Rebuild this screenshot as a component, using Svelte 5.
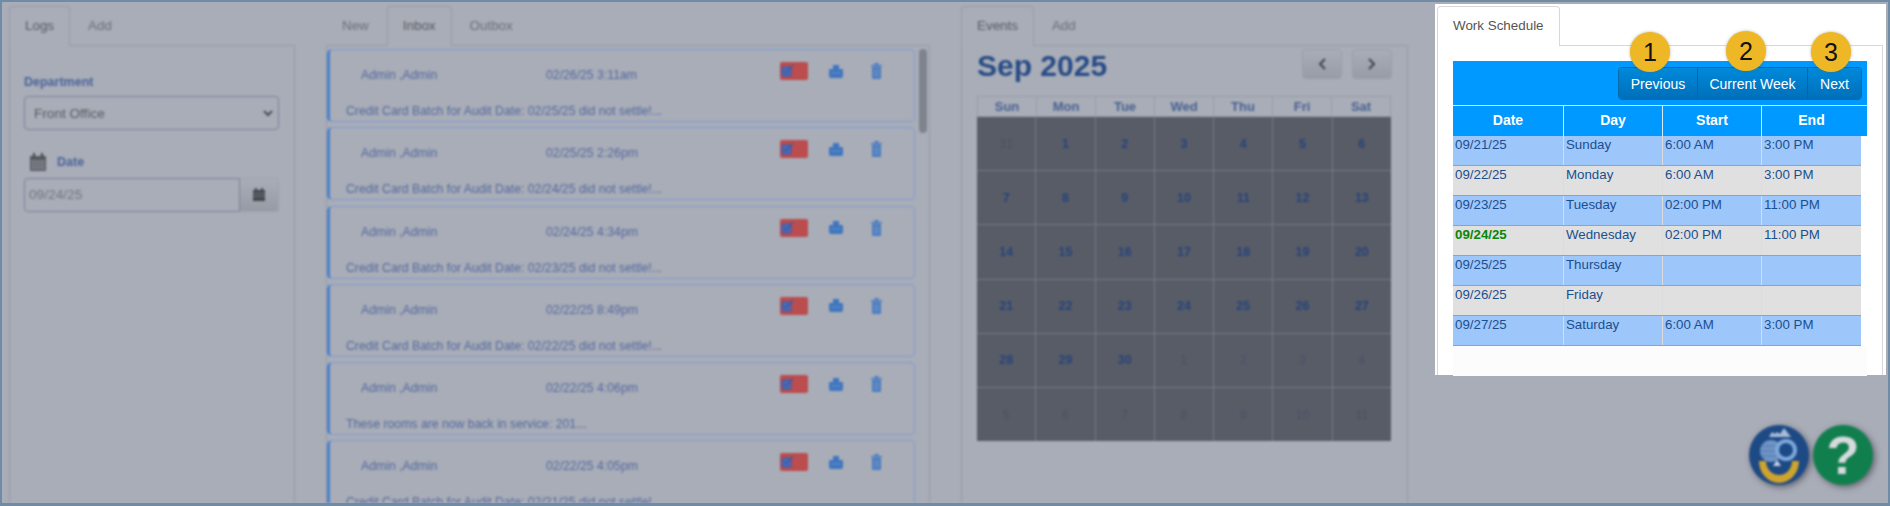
<script>
  const messages = [
    { date: '02/26/25 3:11am', text: 'Credit Card Batch for Audit Date: 02/25/25 did not settle!...' },
    { date: '02/25/25 2:26pm', text: 'Credit Card Batch for Audit Date: 02/24/25 did not settle!...' },
    { date: '02/24/25 4:34pm', text: 'Credit Card Batch for Audit Date: 02/23/25 did not settle!...' },
    { date: '02/22/25 8:49pm', text: 'Credit Card Batch for Audit Date: 02/22/25 did not settle!...' },
    { date: '02/22/25 4:06pm', text: 'These rooms are now back in service: 201...' },
    { date: '02/22/25 4:05pm', text: 'Credit Card Batch for Audit Date: 02/21/25 did not settle!...' }
  ];

  const weekdays = ['Sun', 'Mon', 'Tue', 'Wed', 'Thu', 'Fri', 'Sat'];

  // 31 from august, then september, then the start of october
  const days = [{ n: 31, off: true }];
  for (let i = 1; i <= 30; i++) days.push({ n: i, off: false });
  for (let i = 1; i <= 11; i++) days.push({ n: i, off: true });

  const schedule = [
    { date: '09/21/25', day: 'Sunday', start: '6:00 AM', end: '3:00 PM' },
    { date: '09/22/25', day: 'Monday', start: '6:00 AM', end: '3:00 PM' },
    { date: '09/23/25', day: 'Tuesday', start: '02:00 PM', end: '11:00 PM' },
    { date: '09/24/25', day: 'Wednesday', start: '02:00 PM', end: '11:00 PM', today: true },
    { date: '09/25/25', day: 'Thursday', start: '', end: '' },
    { date: '09/26/25', day: 'Friday', start: '', end: '' },
    { date: '09/27/25', day: 'Saturday', start: '6:00 AM', end: '3:00 PM' }
  ];
</script>

<div class="page">
  <div class="dim">
    <section class="col logs">
      <nav class="tabs">
        <span class="tab active">Logs</span>
        <span class="tab">Add</span>
      </nav>
      <div class="panel form">
        <span class="field-label">Department</span>
        <div class="select">
          <span>Front Office</span>
          <svg width="10" height="7" viewBox="0 0 10 7"><path d="M1 1l4 4 4-4" fill="none" stroke="#4a4d55" stroke-width="2"/></svg>
        </div>
        <div class="date-label">
          <svg width="18" height="18" viewBox="0 0 18 18">
            <path d="M1 3h16v14a1 1 0 0 1-1 1H2a1 1 0 0 1-1-1z" fill="#55585f"/>
            <path d="M4 0h2v4H4zM12 0h2v4h-2z" fill="#44474e"/>
            <path d="M2.5 7h13v9.500h-13z" fill="#82858d"/>
            <path d="M2.500 10h13M2.500 13h13M6 7v10M9 7v10M12 7v10" stroke="#5e6168" stroke-width=".8"/>
          </svg>
          <span class="field-label">Date</span>
        </div>
        <div class="date-input">
          <span class="date-value">09/24/25</span>
          <span class="date-btn">
            <svg width="14" height="14" viewBox="0 0 14 14">
              <path d="M1 2h12v11H1z" fill="#44474e"/>
              <path d="M3 0h2v3H3zM9 0h2v3H9z" fill="#44474e"/>
              <path d="M1 5.500h12M1 8.500h12" stroke="#82858d" stroke-width=".8"/>
            </svg>
          </span>
        </div>
      </div>
    </section>

    <section class="col inbox">
      <nav class="tabs">
        <span class="tab">New</span>
        <span class="tab active">Inbox</span>
        <span class="tab">Outbox</span>
      </nav>
      <div class="panel list">
        <div class="cards">
          {#each messages as msg}
            <article class="card">
              <div class="card-top">
                <span class="sender">Admin ,Admin</span>
                <span class="sent">{msg.date}</span>
                <span class="badge">
                  <svg width="14" height="14" viewBox="0 0 14 14">
                    <path d="M1 3h9v9H1z" fill="#4a6bb5" stroke="#3d5ba8"/>
                    <path d="M3 7l2 2 7-8" fill="none" stroke="#3d5ba8" stroke-width="1.500"/>
                  </svg>
                </span>
                <svg class="printer" width="14" height="13" viewBox="0 0 14 13">
                  <path d="M4 0h6v5H4z" fill="#3f76bf"/>
                  <path d="M0 5a1 1 0 0 1 1-1h12a1 1 0 0 1 1 1v6a2 2 0 0 1-2 2H2a2 2 0 0 1-2-2z" fill="#3f76bf"/>
                  <path d="M2 8h10" stroke="#7d9cc6" stroke-width=".7"/>
                </svg>
                <svg class="trash" width="11" height="16" viewBox="0 0 11 16">
                  <path d="M0 2h11v1.500H0zM3.500 0h4v2h-4z" fill="#4a7cc0"/>
                  <path d="M1 4h9v11a1 1 0 0 1-1 1H2a1 1 0 0 1-1-1z" fill="#4a7cc0"/>
                  <path d="M3.500 6v8M5.500 6v8M7.500 6v8" stroke="#7d9cc6" stroke-width=".7"/>
                </svg>
              </div>
              <p class="msg">{msg.text}</p>
            </article>
          {/each}
        </div>
        <div class="scroll"><div class="thumb"></div></div>
      </div>
    </section>

    <section class="col events">
      <nav class="tabs">
        <span class="tab active">Events</span>
        <span class="tab">Add</span>
      </nav>
      <div class="panel cal">
        <div class="cal-head">
          <h2>Sep 2025</h2>
          <div class="cal-nav">
            <button aria-label="Previous month">
              <svg width="10" height="12" viewBox="0 0 10 12"><path d="M8 1L3 6l5 5" fill="none" stroke="#3f424a" stroke-width="2"/></svg>
            </button>
            <button aria-label="Next month">
              <svg width="10" height="12" viewBox="0 0 10 12"><path d="M2 1l5 5-5 5" fill="none" stroke="#3f424a" stroke-width="2"/></svg>
            </button>
          </div>
        </div>
        <div class="cal-weekdays">
          {#each weekdays as d}
            <div class="wd">{d}</div>
          {/each}
        </div>
        <div class="cal-days">
          {#each days as d}
            <div class="day" class:off={d.off}>{d.n}</div>
          {/each}
        </div>
      </div>
    </section>

    <div class="helpers">
      <svg class="logo" width="60" height="60" viewBox="0 0 60 60">
        <circle cx="30" cy="30" r="30" fill="#1d4a85"/>
        <path d="M20 12l3-5 3 2 2-2 3 2 4-6 7 9z" fill="#a8bcd8"/>
        <circle cx="22" cy="26" r="11" fill="#6f93c4"/>
        <path d="M12 21h20M11 26h22M12 31h20" stroke="#527ab0" stroke-width="1"/>
        <circle cx="37" cy="25" r="9" fill="#1d4a85" stroke="#7fa8dc" stroke-width="4"/>
        <path d="M28 35l4 6h-8z" fill="#c6d2e2"/>
        <path d="M10 36h7a13 14 0 0 0 26 0h7a20 22 0 0 1-40 0z" fill="#cfa42e"/>
      </svg>
      <div class="help">?</div>
    </div>
  </div>

  <section class="spot">
    <nav class="tabs">
      <span class="tab active bright">Work Schedule</span>
    </nav>
    <div class="panel sched">
      <div class="sched-wrap">
        <div class="toolbar">
          <div class="btn-group">
            <button class="prev">Previous</button>
            <button class="cur">Current Week</button>
            <button class="nxt">Next</button>
          </div>
        </div>
        <div class="row head">
          <div>Date</div>
          <div>Day</div>
          <div>Start</div>
          <div>End</div>
        </div>
        {#each schedule as r, i}
          <div class="row body" class:alt={i % 2 === 1}>
            <div class:today={r.today}>{r.date}</div>
            <div>{r.day}</div>
            <div>{r.start}</div>
            <div>{r.end}</div>
          </div>
        {/each}
        <div class="sched-foot"></div>
      </div>
    </div>
    <span class="step one">1</span>
    <span class="step two">2</span>
    <span class="step three">3</span>
  </section>
</div>

<style>
  :global(body) {
    margin: 0;
    background: #a9adb8;
  }
  .page {
    position: relative;
    box-sizing: border-box;
    width: 1890px;
    height: 506px;
    overflow: hidden;
    display: flex;
    background: #a9adb8;
    border: 2px solid #6f8ba5;
    border-bottom-width: 3px;
    font-family: "Liberation Sans", Arial, sans-serif;
  }
  .dim {
    position: relative;
    flex: none;
    width: 1431px;
    height: 501px;
    display: flex;
    padding: 4px 0 0 7px;
    box-sizing: border-box;
    filter: blur(1px);
  }
  .col {
    flex: none;
    display: flex;
    flex-direction: column;
  }
  .logs { width: 286px; }
  .inbox { width: 604px; margin-left: 31px; }
  .events { width: 447px; margin-left: 31px; }

  .tabs {
    display: flex;
    height: 39px;
    flex: none;
    font-size: 13.4px;
  }
  .tab {
    box-sizing: border-box;
    height: 40px;
    padding: 11px 15px 0;
    margin-right: 2px;
    border: 1px solid transparent;
    border-bottom: 0;
    color: #6c6f78;
    border-radius: 4px 4px 0 0;
  }
  .tab.active {
    position: relative;
    color: #5a5d66;
    border-color: #989ca8;
    background: #a9adb8;
    z-index: 1;
  }
  .tab.bright {
    color: #555;
    border-color: #d8d8d8;
    background: #fff;
  }
  .panel {
    flex: 1;
    min-height: 0;
    border: 1px solid #989ca8;
    border-bottom: 0;
  }

  .form {
    padding: 28px 15px 0 14px;
    display: flex;
    flex-direction: column;
  }
  .field-label {
    font-size: 12.5px;
    font-weight: bold;
    color: #4a6299;
    line-height: 16px;
  }
  .select {
    box-sizing: border-box;
    height: 34px;
    margin-top: 6px;
    border: 1px solid #7d8098;
    border-radius: 4px;
    display: flex;
    align-items: center;
    justify-content: space-between;
    padding: 0 5px 0 9px;
    font-size: 13.6px;
    color: #585b62;
  }
  .date-label {
    display: flex;
    align-items: center;
    gap: 10px;
    margin: 23px 0 7px 5px;
    height: 18px;
  }
  .date-input {
    box-sizing: border-box;
    display: flex;
    height: 34px;
    border-radius: 4px;
  }
  .date-value {
    flex: 1;
    box-sizing: border-box;
    border: 1px solid #7d8098;
    border-radius: 4px 0 0 4px;
    padding: 8px 0 0 4px;
    font-size: 13.7px;
    color: #73767d;
  }
  .date-btn {
    flex: none;
    width: 39px;
    display: flex;
    align-items: center;
    justify-content: center;
    background: linear-gradient(#a9adb8, #979ba5);
    border: 1px solid #9ea2ac;
    border-left: 0;
    border-radius: 0 4px 4px 0;
    box-sizing: border-box;
  }

  .list {
    position: relative;
    display: flex;
    padding: 3px 0 0 0;
    overflow: hidden;
  }
  .cards {
    width: 588px;
    display: flex;
    flex-direction: column;
    gap: 5.300px;
  }
  .card {
    flex: none;
    box-sizing: border-box;
    height: 73px;
    border: 1px solid #7f9bd0;
    border-left: 3px solid #4a80cc;
    border-radius: 5px;
    color: #52689c;
    font-size: 12.25px;
    position: relative;
  }
  .card-top {
    position: relative;
    height: 50px;
    display: flex;
    align-items: center;
    padding-left: 31px;
  }
  .sender { width: 185px; }
  .sent { width: 234px; }
  .badge {
    width: 28px;
    height: 18px;
    margin-top: -8px;
    padding: 2px 0 0 1px;
    box-sizing: border-box;
    background: #bc4d4e;
    border-radius: 2px;
    display: block;
    line-height: 0;
  }
  .printer { margin: -8px 0 0 21px; }
  .trash { margin: -8px 0 0 28px; }
  .msg {
    margin: 0;
    position: absolute;
    left: 16px;
    bottom: 2px;
    line-height: 16px;
    white-space: nowrap;
  }
  .scroll {
    margin-left: 4px;
    width: 8px;
  }
  .thumb {
    width: 8px;
    height: 84px;
    border-radius: 4px;
    background: #7f838d;
  }

  .cal {
    padding: 3px 15px 0 15px;
  }
  .cal-head {
    display: flex;
    justify-content: space-between;
    height: 47px;
  }
  h2 {
    margin: 0;
    font-size: 30px;
    line-height: 34px;
    font-weight: bold;
    color: #274b85;
  }
  .cal-nav {
    display: flex;
    gap: 10px;
  }
  .cal-nav button {
    width: 40px;
    height: 30px;
    padding: 0;
    border: 1px solid #9a9ea8;
    border-radius: 4px;
    background: linear-gradient(#a9adb8, #989ca6);
    display: flex;
    align-items: center;
    justify-content: center;
  }
  .cal-weekdays {
    display: grid;
    grid-template-columns: repeat(7, 1fr);
    gap: 1px;
    width: 414px;
    height: 21px;
    box-sizing: border-box;
    border: 1px solid #989ca8;
    background: #989ca8;
  }
  .cal-days {
    display: grid;
    grid-template-columns: repeat(7, 1fr);
    grid-template-rows: repeat(6, 53.200px);
    gap: 1px;
    width: 414px;
    box-sizing: border-box;
    background: #757985;
  }
  .wd {
    background: #a9adb8;
    color: #48618f;
    font-size: 13px;
    font-weight: bold;
    display: flex;
    align-items: center;
    justify-content: center;
  }
  .day {
    background: #585c67;
    color: #26437a;
    font-size: 12.500px;
    font-weight: bold;
    display: flex;
    align-items: center;
    justify-content: center;
  }
  .day.off {
    color: #4b5266;
    font-weight: normal;
  }

  .helpers {
    position: absolute;
    left: 1747px;
    top: 423px;
    display: flex;
    gap: 4px;
  }
  .logo, .help {
    filter: drop-shadow(2px 2px 3px rgba(40, 44, 55, 0.6));
  }
  .help {
    width: 60px;
    height: 60px;
    border-radius: 50%;
    background: #117f4d;
    color: #d7dade;
    font-size: 54px;
    line-height: 60px;
    font-weight: bold;
    text-align: center;
  }

  .spot {
    position: relative;
    flex: none;
    box-sizing: border-box;
    width: 451px;
    height: 371px;
    margin: 2px 0 0 2px;
    padding: 2px 3px 0 2px;
    background: #fff;
    display: flex;
    flex-direction: column;
  }
  .sched {
    border-color: #d8d8d8;
    padding: 15px 0 0 15px;
  }
  .sched-wrap {
    width: 414px;
  }
  .toolbar {
    height: 44px;
    background: #0099ff;
    display: flex;
    justify-content: flex-end;
    align-items: flex-start;
    padding: 6px 5px 0 0;
    box-sizing: border-box;
  }
  .btn-group {
    display: flex;
    height: 33px;
    border: 1px solid #0a6aa8;
    border-radius: 4px;
    overflow: hidden;
    box-sizing: border-box;
  }
  .btn-group button {
    padding: 0;
    border: 0;
    font: inherit;
    font-size: 14px;
    color: #fff;
    background: linear-gradient(#0089da, #006fba);
    border-right: 1px solid #0a62a0;
  }
  .btn-group button:last-child { border-right: 0; }
  .prev { width: 79px; }
  .cur { width: 110px; }
  .nxt { width: 53px; }

  .row {
    display: grid;
    grid-template-columns: 111px 99px 99px 99px;
    width: 408px;
    box-sizing: border-box;
  }
  .head {
    width: 414px;
    height: 31px;
    background: #0099ff;
    color: #fff;
    font-size: 14px;
    font-weight: bold;
    border-top: 1px solid #d6ecfb;
  }
  .head div {
    text-align: center;
    line-height: 29px;
    border-right: 1px solid #d6ecfb;
  }
  .head div:last-child { border-right: 0; }
  .body {
    height: 30px;
    background: #9dc6fb;
    color: #1a4f8f;
    font-size: 13.3px;
    border-bottom: 1px solid #a0a0a0;
  }
  .body.alt { background: #e0e0e0; }
  .body div {
    padding: 0 0 0 2px;
    line-height: 17px;
    border-right: 1px solid #dcdcdc;
  }
  .body div:last-child { border-right: 0; }
  .today {
    color: #0a860a;
    font-weight: bold;
  }
  .sched-foot {
    height: 30px;
    background: #fcfcfc;
  }

  .step {
    position: absolute;
    top: 28px;
    width: 40px;
    height: 40px;
    border-radius: 50%;
    background: #eeb726;
    color: #111;
    font-size: 25px;
    line-height: 40px;
    text-align: center;
    box-shadow: 0 0 3px rgba(120, 100, 30, 0.5);
  }
  .one { left: 195px; }
  .two { left: 291px; top: 27px; }
  .three { left: 376px; }
</style>
